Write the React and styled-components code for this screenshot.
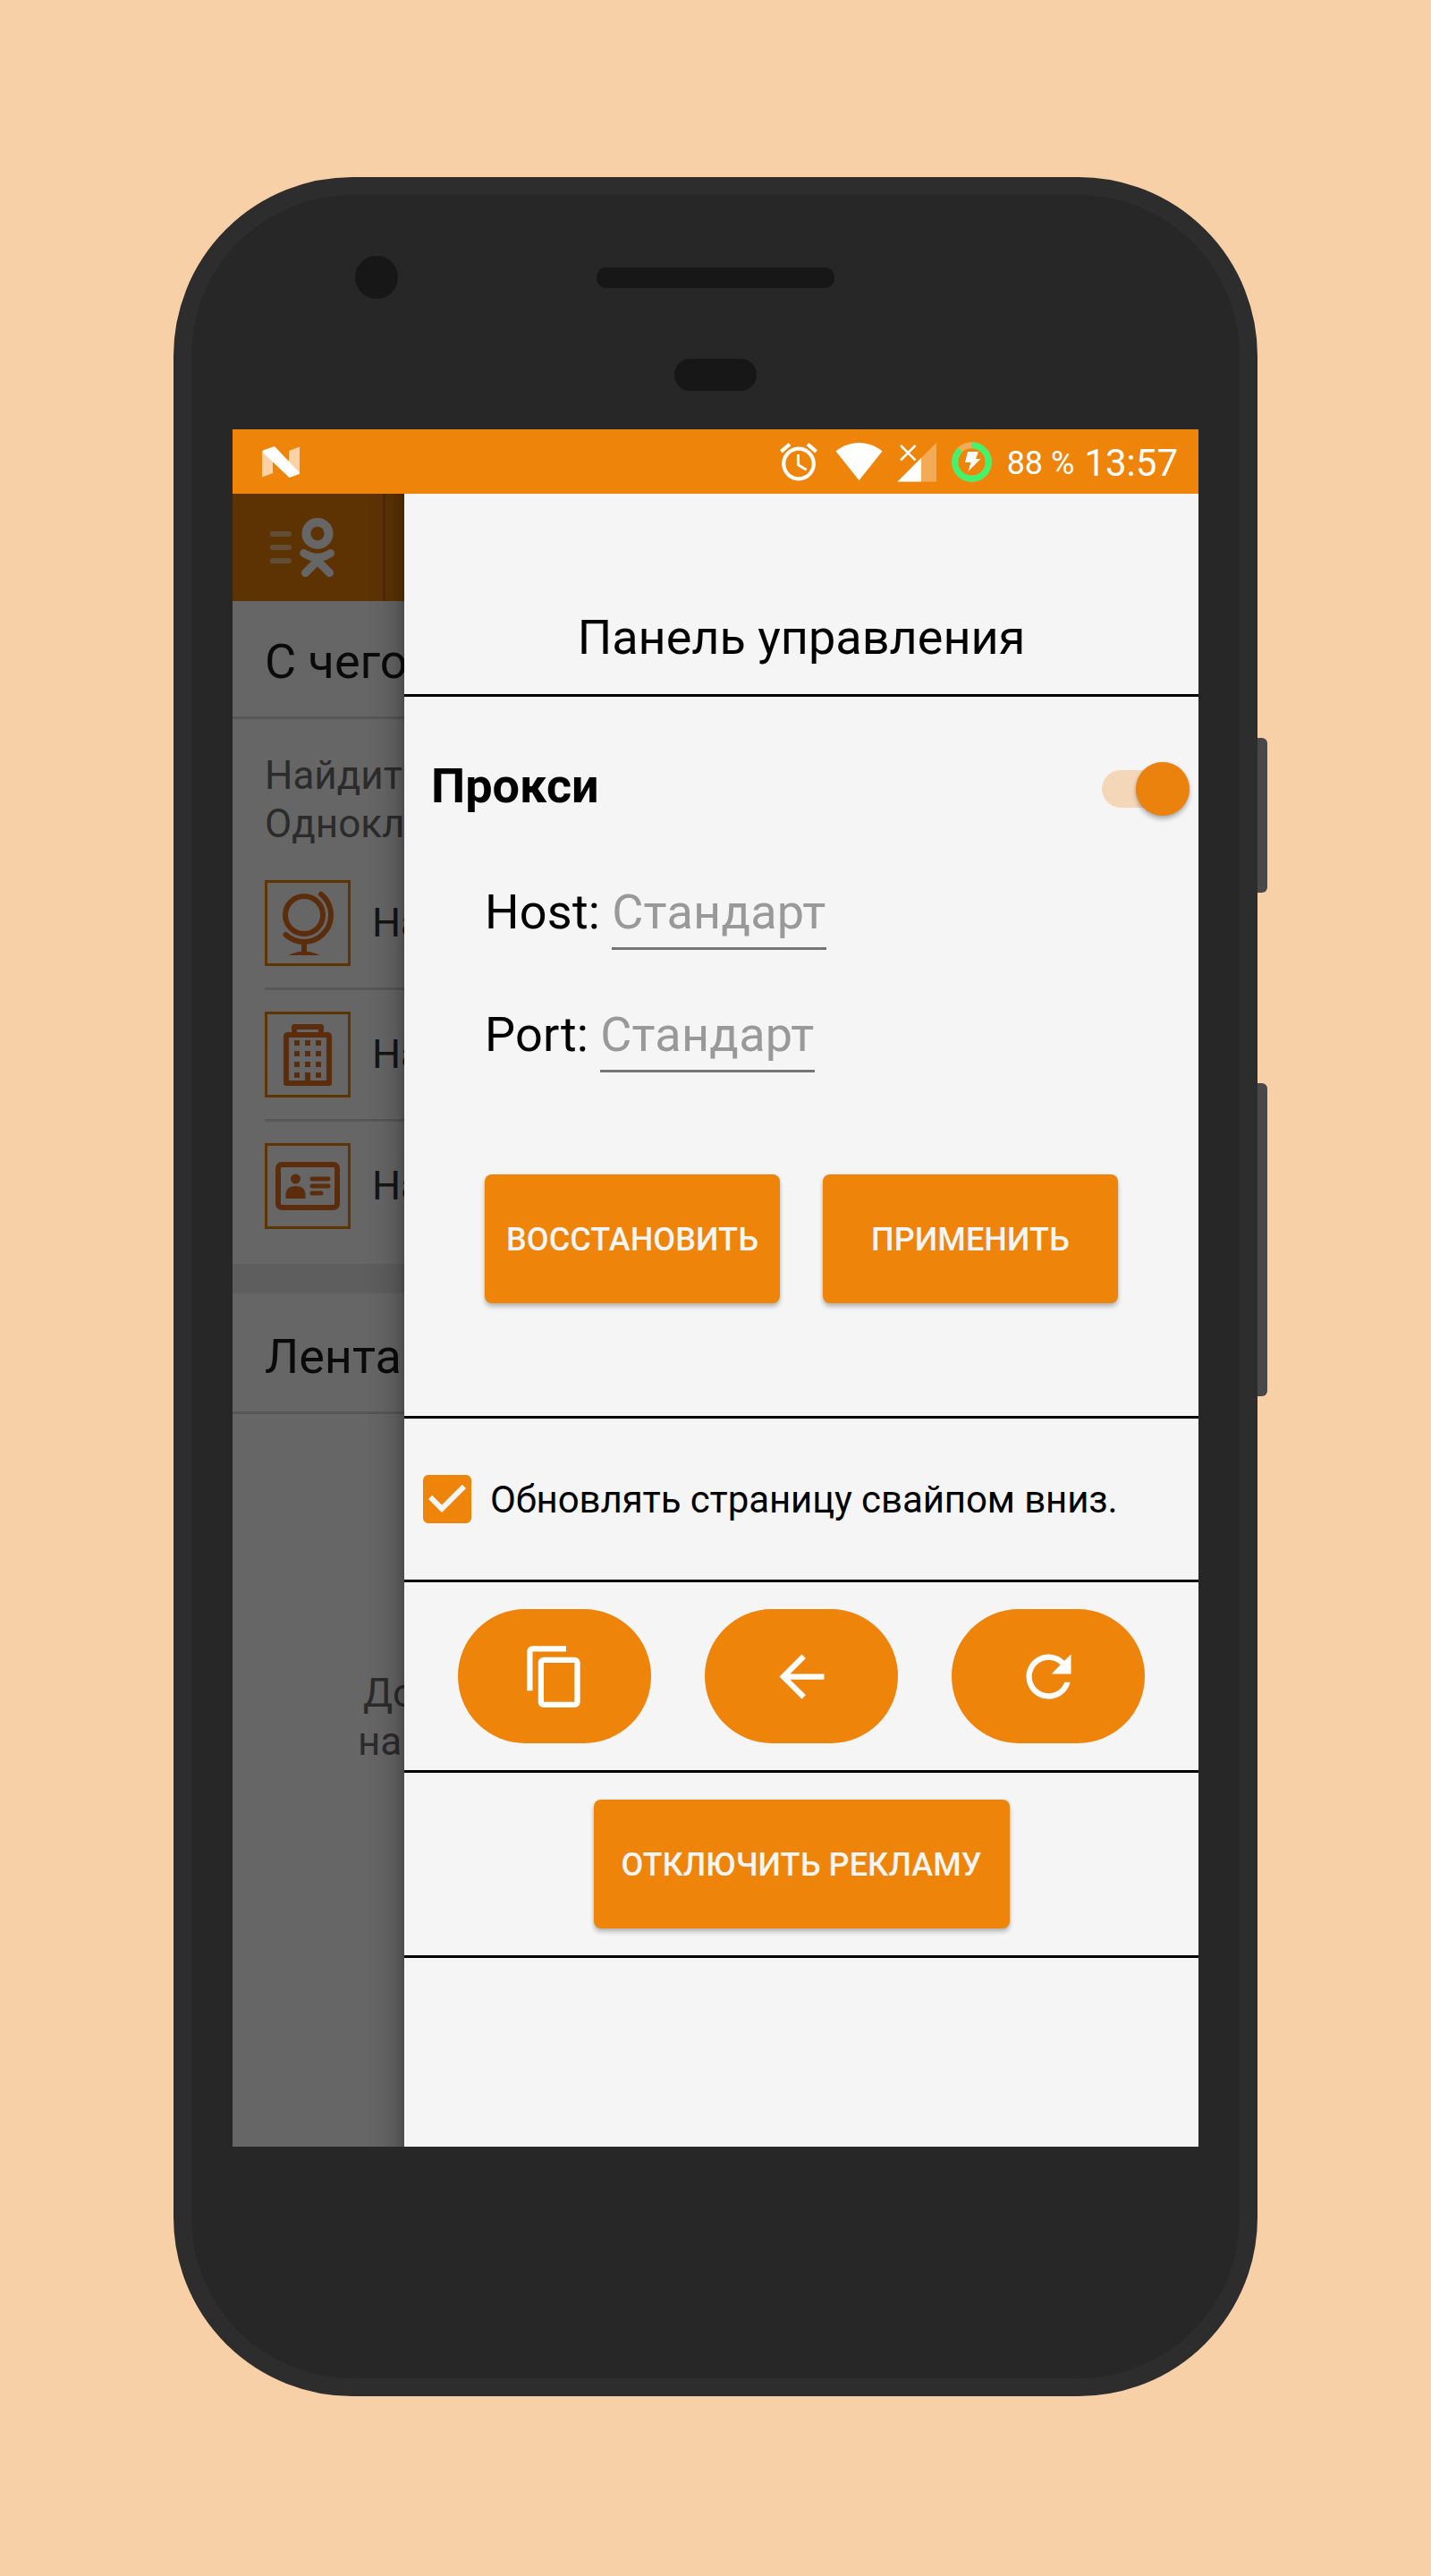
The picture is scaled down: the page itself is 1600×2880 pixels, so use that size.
import React from "react";
import styled, { createGlobalStyle } from "styled-components";

const ORANGE = "#ee840a";
const BRAND = "#e6701e";

const GlobalStyle = createGlobalStyle`
  *, *::before, *::after { box-sizing: border-box; }
  body { margin: 0; background: #f7d0a7; font-family: Roboto, "Noto Sans", sans-serif; }
  svg { display: block; flex: none; }
`;

const Page = styled.main`
  display: flex;
  align-items: flex-start;
  width: 1600px;
  height: 2880px;
  padding: 198px 0 0 194px;
  overflow: hidden;
  background: #f7d0a7;
`;

const Device = styled.div`
  display: flex;
  flex-direction: column;
  align-items: center;
  flex: none;
  width: 1212px;
  height: 2481px;
  border: 20px solid #2d2d2d;
  border-radius: 200px;
  background: #272727;
`;

const Keys = styled.div`
  display: flex;
  flex-direction: column;
  gap: 213px;
  padding-top: 627px;
`;

const Key = styled.div`
  width: 11px;
  height: ${(p) => p.$h}px;
  border-radius: 0 6px 6px 0;
  background: #484848;
`;

const Forehead = styled.div`
  display: grid;
  grid-template-columns: 1fr 266px 1fr;
  align-content: start;
  justify-items: center;
  align-items: center;
  row-gap: 67px;
  width: 100%;
  height: 262px;
  padding-top: 68px;
`;

const Camera = styled.div`
  justify-self: start;
  margin-left: 183px;
  width: 48px;
  height: 48px;
  border-radius: 50%;
  background: #171717;
`;

const Speaker = styled.div`
  width: 266px;
  height: 23px;
  border-radius: 11px;
  background: #171717;
`;

const Sensor = styled.div`
  grid-column: 2;
  width: 92px;
  height: 36px;
  border-radius: 18px;
  background: #171717;
`;

const Screen = styled.section`
  display: flex;
  flex-direction: column;
  width: 1080px;
  height: 1920px;
  overflow: hidden;
`;

const StatusBar = styled.header`
  display: flex;
  justify-content: space-between;
  align-items: flex-start;
  flex: none;
  height: 72px;
  padding: 0 23px 0 33px;
  background: ${ORANGE};
  color: #fff;
`;

const StatusIcons = styled.div`
  display: flex;
  align-items: flex-start;
`;

const Percent = styled.span`
  margin-left: 17px;
  font-size: 36px;
  line-height: 76px;
`;

const Clock = styled.span`
  margin-left: 11px;
  font-size: 42px;
  line-height: 76px;
`;

const Body = styled.div`
  display: flex;
  flex: 1;
  min-height: 0;
`;

const Underlay = styled.div`
  position: relative;
  flex: none;
  width: 192px;
  overflow: hidden;
  white-space: nowrap;
  background: #fff;
`;

const Scrim = styled.div`
  position: absolute;
  inset: 0;
  background:
    linear-gradient(to left, rgba(0, 0, 0, .26) 0, rgba(0, 0, 0, .12) 10px, rgba(0, 0, 0, .04) 25px, transparent 46px),
    rgba(0, 0, 0, .6);
`;

const SiteBar = styled.div`
  display: flex;
  align-items: stretch;
  height: 120px;
  background: #e9800c;
`;

const SiteLogo = styled.div`
  flex: none;
  width: 171px;
  padding: 27px 0 0 42px;
  border-right: 3px solid #c96a08;
`;

const Heading = styled.h2`
  margin: 0;
  height: ${(p) => p.$h}px;
  padding: ${(p) => p.$top}px 0 0 36px;
  border-bottom: 3px solid #dadada;
  font-size: 54px;
  font-weight: 400;
  line-height: 64px;
  color: #1a1a1a;
`;

const Lead = styled.p`
  margin: 0;
  padding: 36px 0 0 36px;
  height: 156px;
  font-size: 44px;
  line-height: 54px;
  color: #6c6c6c;
`;

const FindRow = styled.div`
  display: flex;
  align-items: flex-start;
  gap: 24px;
  height: ${(p) => (p.$last ? 159 : 147)}px;
  margin-left: 36px;
  padding-top: 24px;
  border-bottom: ${(p) => (p.$last ? "0" : "3px")} solid #dadada;
  font-size: 45px;
  line-height: 96px;
  color: #333;
`;

const FindIcon = styled.div`
  display: flex;
  align-items: center;
  justify-content: center;
  flex: none;
  width: 96px;
  height: 96px;
  border: 3px solid #ee8208;
`;

const Band = styled.div`
  height: 33px;
  background: #ececec;
`;

const Empty = styled.div`
  padding: 285px 0 0 140px;
  font-size: 44px;
  line-height: 54px;
  color: #6c6c6c;
`;

const EmptyLine = styled.div`
  padding-left: ${(p) => p.$indent || 0}px;
`;

const Drawer = styled.aside`
  flex: 1;
  background: #f5f5f5;
  color: #000;
`;

const Section = styled.div`
  height: ${(p) => p.$h}px;
  border-bottom: 3px solid #000;
`;

const TitleBlock = styled(Section)`
  padding-top: 128px;
  text-align: center;
  font-size: 54px;
  line-height: 65px;
`;

const ProxyBlock = styled(Section)`
  display: flex;
  flex-direction: column;
  padding-top: 67px;
`;

const ProxyHead = styled.div`
  display: flex;
  justify-content: space-between;
  align-items: flex-start;
  height: 142px;
  padding: 0 10px 0 30px;
`;

const ProxyTitle = styled.h3`
  margin: 0;
  font-size: 54px;
  font-weight: 700;
  line-height: 66px;
`;

const Switch = styled.div`
  display: flex;
  align-items: center;
  justify-content: flex-end;
  width: 98px;
  height: 60px;
  margin-top: 6px;
  background: linear-gradient(#f4d7b8, #f4d7b8) no-repeat 21px 9px / 50px 42px,
    radial-gradient(circle 21px at 21px 30px, #f4d7b8 20.5px, transparent 21.2px);
`;

const Thumb = styled.div`
  width: 60px;
  height: 60px;
  border-radius: 50%;
  background: #ea820d;
  box-shadow: 0 4px 5px rgba(0, 0, 0, .26), 0 0 3px rgba(0, 0, 0, .12);
`;

const Field = styled.label`
  display: flex;
  align-items: flex-start;
  gap: 13px;
  margin: 0 0 63px 90px;
  font-size: 54px;
  letter-spacing: .25px;
  line-height: 64px;
`;

const Hint = styled.span`
  padding-bottom: 7px;
  border-bottom: 3px solid #757575;
  color: #999;
`;

const ButtonRow = styled.div`
  display: flex;
  gap: 48px;
  margin: 51px 0 0 90px;
`;

const Button = styled.button`
  width: ${(p) => p.$w}px;
  height: 144px;
  padding: 2px 0 0;
  border: 0;
  border-radius: 8px;
  background: ${ORANGE};
  color: #f5f5f5;
  font: 500 36px/44px Roboto, sans-serif;
  letter-spacing: .1px;
  white-space: nowrap;
  box-shadow: 0 4px 5px rgba(0, 0, 0, .24), 0 0 3px rgba(0, 0, 0, .1);
`;

const CheckRow = styled(Section)`
  display: flex;
  align-items: center;
  gap: 12px;
  padding-left: 12px;
  font-size: 42px;
  letter-spacing: -.1px;
  line-height: 50px;
  white-space: nowrap;
`;

const CheckLabel = styled.span`
  padding-top: 2px;
`;

const PillRow = styled(Section)`
  display: flex;
  justify-content: center;
  align-items: center;
  gap: 60px;
`;

const Pill = styled.button`
  display: flex;
  align-items: center;
  justify-content: center;
  width: 216px;
  height: 150px;
  padding: 0;
  border: 0;
  border-radius: 75px;
  background: ${ORANGE};
`;

const AdRow = styled(Section)`
  display: flex;
  justify-content: center;
  align-items: center;
`;

const Ico = ({ d, size }) => (
  <svg width={size} height={size} viewBox="0 0 24 24" fill="#fff"><path d={d} /></svg>
);

const COPY = "M16 1H4c-1.1 0-2 .9-2 2v14h2V3h12V1zm3 4H8c-1.1 0-2 .9-2 2v14c0 1.1.9 2 2 2h11c1.1 0 2-.9 2-2V7c0-1.1-.9-2-2-2zm0 16H8V7h11v14z";
const BACK = "M20 11H7.83l5.59-5.59L12 4l-8 8 8 8 1.41-1.41L7.83 13H20v-2z";
const REFRESH = "M17.65 6.35C16.2 4.9 14.21 4 12 4c-4.42 0-7.99 3.58-7.99 8s3.57 8 7.99 8c3.73 0 6.84-2.55 7.73-6h-2.08c-.82 2.33-3.04 4-5.65 4-3.31 0-6-2.69-6-6s2.69-6 6-6c1.66 0 3.14.69 4.22 1.78L13 11h7V4l-2.35 2.35z";
const CHECKBOX = "M19 3H5c-1.11 0-2 .9-2 2v14c0 1.1.89 2 2 2h14c1.11 0 2-.9 2-2V5c0-1.1-.89-2-2-2z";

const NougatIcon = () => (
  <svg width="42" height="72" viewBox="0 0 42 72">
    <path d="M0 24L12 32V49L0 53.5z" fill="#fbd2a6" />
    <path d="M30 24L42 19.500V50L30 38z" fill="#fbd2a6" />
    <path d="M1 23.500L14 19L42 48.500L41.500 50L30.500 54L1 26z" fill="#fff" />
  </svg>
);

const TrayIcons = () => (
  <svg width="237" height="72" viewBox="872 480 237 72">
    <g transform="translate(867.8 491.2) scale(2.1)" fill="#fff">
      <path d="M22 5.72l-4.6-3.86-1.29 1.53 4.6 3.86L22 5.72zM7.88 3.39L6.6 1.86 2 5.71l1.29 1.53 4.59-3.85zM12.5 8H11v6l4.75 2.85.75-1.23-4-2.37V8zM12 4c-4.97 0-9 4.03-9 9s4.02 9 9 9c4.97 0 9-4.03 9-9s-4.03-9-9-9zm0 16c-3.87 0-7-3.13-7-7s3.13-7 7-7 7 3.13 7 7-3.13 7-7 7z" />
    </g>
    <path d="M934.5 504.5C942 498.5 951 495 960.5 495S979 498.5 986.5 504.5L960.5 537z" fill="#fff" />
    <path d="M1047 495V538.5H1003.5z" fill="#f4ab57" />
    <path d="M1030 512V538.5H1003.5z" fill="#fff" />
    <path d="M1007 498L1023.5 514.5M1023.5 498L1007 514.5" stroke="#fff" strokeWidth="2.6" />
    <circle cx="1086.5" cy="516.5" r="18.8" fill="none" stroke="#f4ab57" strokeWidth="7" />
    <circle cx="1086.5" cy="516.5" r="18.8" fill="none" stroke="#43f36c" strokeWidth="7" pathLength="100" strokeDasharray="88 12" transform="rotate(-90 1086.5 516.5)" />
    <path d="M1082 505H1094L1091 513H1096.5L1082.5 527L1085.5 517H1079z" fill="#fff" />
  </svg>
);

const OkLogo = () => (
  <svg width="76" height="68" viewBox="302 579 76 68" fill="none" strokeLinecap="round">
    <path d="M305 597H323M305 612H323M305 627H323" stroke="#fbc18a" strokeWidth="6" />
    <circle cx="355" cy="596.5" r="12.6" stroke="#fff" strokeWidth="9.8" />
    <path d="M339.8 618.5Q355 628 369.5 618.5" stroke="#fff" strokeWidth="9" />
    <path d="M355 627L341.5 640.5M355 627L368.5 640.5" stroke="#fff" strokeWidth="9" />
  </svg>
);

const GlobeIcon = () => (
  <svg width="90" height="90" viewBox="299 987 90 90" fill="none" stroke={BRAND} strokeWidth="6">
    <circle cx="340" cy="1023" r="21" />
    <path d="M359 999.800A30 30 0 0 1 361 1044.4A30 30 0 0 1 319.500 1045" strokeLinecap="round" />
    <path d="M340 1053V1066" />
    <path d="M322.500 1068Q340 1059 357.500 1068z" fill={BRAND} stroke="none" />
  </svg>
);

const OfficeIcon = () => (
  <svg width="90" height="90" viewBox="299 1134 90 90" fill="none" stroke={BRAND} strokeWidth="6">
    <path d="M320 1211V1159Q320 1157 322 1157H366Q368 1157 368 1159V1211zM329 1156V1148H359V1156" strokeLinejoin="round" />
    {[1163, 1175, 1187, 1199].map((y) => [329, 341, 353].map((x) => (
      <rect key={`${x}-${y}`} x={x} y={y} width="6" height="6" fill={BRAND} stroke="none" />
    )))}
    <path d="M344 1199V1212" />
  </svg>
);

const CardIcon = () => (
  <svg width="90" height="90" viewBox="299 1281 90 90" fill={BRAND}>
    <rect x="311" y="1302" width="66" height="48" rx="4" fill="none" stroke={BRAND} strokeWidth="6" />
    <circle cx="330.5" cy="1318" r="5.5" />
    <path d="M319.5 1340V1336Q319.5 1326 330.5 1326T341.5 1336V1340z" />
    <path d="M349 1318H367M349 1326H367M349 1334H359" stroke={BRAND} strokeWidth="5" strokeLinecap="round" />
  </svg>
);

export default function App() {
  return (
    <Page>
      <GlobalStyle />
      <Device>
        <Forehead>
          <Camera />
          <Speaker />
          <span />
          <Sensor />
        </Forehead>
        <Screen>
          <StatusBar>
            <NougatIcon />
            <StatusIcons>
              <TrayIcons />
              <Percent>88 %</Percent>
              <Clock>13:57</Clock>
            </StatusIcons>
          </StatusBar>
          <Body>
            <Underlay>
              <SiteBar><SiteLogo><OkLogo /></SiteLogo></SiteBar>
              <Heading $h={132} $top={36}>С чего</Heading>
              <Lead>Найдит<br />Однокл</Lead>
              <FindRow><FindIcon><GlobeIcon /></FindIcon>На</FindRow>
              <FindRow><FindIcon><OfficeIcon /></FindIcon>На</FindRow>
              <FindRow $last><FindIcon><CardIcon /></FindIcon>На</FindRow>
              <Band />
              <Heading $h={135} $top={39}>Лента</Heading>
              <Empty>
                <EmptyLine $indent={6}>До</EmptyLine>
                <EmptyLine>на</EmptyLine>
              </Empty>
              <Scrim />
            </Underlay>
            <Drawer>
              <TitleBlock $h={227}>Панель управления</TitleBlock>
              <ProxyBlock $h={807}>
                <ProxyHead>
                  <ProxyTitle>Прокси</ProxyTitle>
                  <Switch><Thumb /></Switch>
                </ProxyHead>
                <Field>Host:<Hint>Стандарт</Hint></Field>
                <Field>Port:<Hint>Стандарт</Hint></Field>
                <ButtonRow>
                  <Button $w={330}>ВОССТАНОВИТЬ</Button>
                  <Button $w={330}>ПРИМЕНИТЬ</Button>
                </ButtonRow>
              </ProxyBlock>
              <CheckRow $h={183}>
                <svg width="72" height="72" viewBox="0 0 24 24">
                  <path d={CHECKBOX} fill={ORANGE} />
                  <path d="M10 17l-5-5 1.41-1.41L10 14.17l7.59-7.59L19 8z" fill="#f5f5f5" />
                </svg>
                <CheckLabel>Обновлять страницу свайпом вниз.</CheckLabel>
              </CheckRow>
              <PillRow $h={213}>
                <Pill><Ico d={COPY} size={75} /></Pill>
                <Pill><Ico d={BACK} size={75} /></Pill>
                <Pill><Ico d={REFRESH} size={75} /></Pill>
              </PillRow>
              <AdRow $h={207}><Button $w={465}>ОТКЛЮЧИТЬ РЕКЛАМУ</Button></AdRow>
            </Drawer>
          </Body>
        </Screen>
      </Device>
      <Keys>
        <Key $h={173} />
        <Key $h={350} />
      </Keys>
    </Page>
  );
}
